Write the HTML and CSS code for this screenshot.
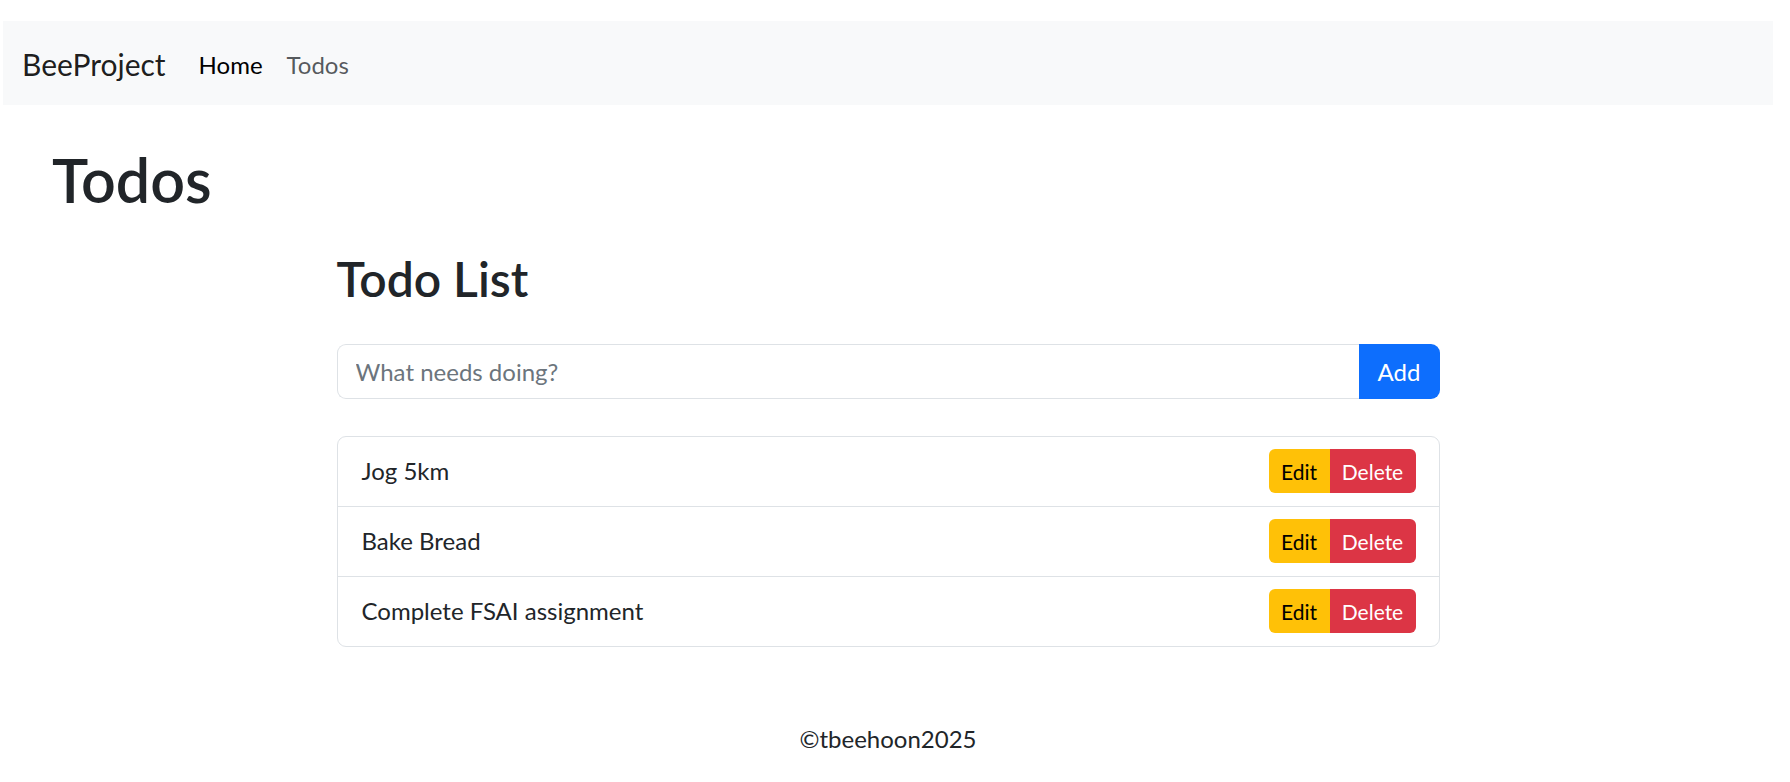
FILE: index.html
```html
<!DOCTYPE html>
<html lang="en">
<head>
<meta charset="utf-8">
<title>BeeProject - Todos</title>
<link rel="stylesheet" href="styles.css">
</head>
<body>
<div class="page">
  <nav class="navbar">
    <a class="brand" href="#">BeeProject</a>
    <div class="nav-links">
      <a class="nav-link active" href="#">Home</a>
      <a class="nav-link" href="#">Todos</a>
    </div>
  </nav>
  <main class="main">
    <h1 class="page-title">Todos</h1>
    <section class="todo">
      <h2 class="todo-title">Todo List</h2>
      <form class="input-group">
        <input class="todo-input" type="text" placeholder="What needs doing?">
        <button class="btn-add" type="button">Add</button>
      </form>
      <ul class="list">
        <li class="item"><span class="item-text">Jog 5km</span><span class="btn-group"><button class="btn btn-edit" type="button">Edit</button><button class="btn btn-delete" type="button">Delete</button></span></li>
        <li class="item"><span class="item-text">Bake Bread</span><span class="btn-group"><button class="btn btn-edit" type="button">Edit</button><button class="btn btn-delete" type="button">Delete</button></span></li>
        <li class="item"><span class="item-text">Complete FSAI assignment</span><span class="btn-group"><button class="btn btn-edit" type="button">Edit</button><button class="btn btn-delete" type="button">Delete</button></span></li>
      </ul>
    </section>
  </main>
  <footer class="footer">©tbeehoon2025</footer>
</div>
</body>
</html>
```

FILE: styles.css
```css
* { box-sizing: border-box; }
html, body { margin: 0; padding: 0; background: #fff; }
body {
  font-family: Lato, "Noto Sans", sans-serif;
  color: #212529;
  font-size: 24px;
  line-height: 1.5;
}
.page {
  margin: 0 17px 0 3px;
  padding-top: 21px;
}
.navbar {
  height: 84px;
  background: #f8f9fa;
  display: flex;
  align-items: center;
  padding: 3px 19px 0;
}
.brand {
  font-size: 30px;
  color: rgba(0,0,0,.9);
  text-decoration: none;
  margin-right: 21px;
}
.nav-links { display: flex; }
.nav-link {
  padding: 0 12px;
  text-decoration: none;
  color: rgba(33,37,41,.75);
  font-size: 24px;
}
.nav-link.active { color: #000; }
.main { padding: 0; }
.page-title {
  font-size: 61px;
  font-weight: 600;
  line-height: 1.2;
  margin: 38px 0 0 49px;
}
.todo {
  width: 1103px;
  margin: 34px auto 0;
}
.todo-title {
  font-size: 48px;
  font-weight: 600;
  line-height: 1.2;
  margin: 0;
}
.input-group {
  display: flex;
  margin: 36px 0 0;
  height: 55px;
}
.todo-input {
  flex: 1;
  min-width: 0;
  border: 1px solid #dee2e6;
  border-right: 0;
  border-radius: 9px 0 0 9px;
  padding: 0 18px;
  font-family: inherit;
  font-size: 24px;
  color: #212529;
  outline: none;
}
.todo-input::placeholder { color: #6c757d; }
.btn-add {
  width: 81px;
  border: 0;
  background: #0d6efd;
  color: #fff;
  font-family: inherit;
  font-size: 24px;
  border-radius: 0 9px 9px 0;
  padding: 0;
}
.list {
  list-style: none;
  margin: 37px 0 0;
  padding: 0;
  border: 1px solid #dee2e6;
  border-radius: 9px;
}
.item {
  display: flex;
  align-items: center;
  justify-content: space-between;
  height: 70px;
  padding: 0 23px 0 24px;
  border-top: 1px solid #dee2e6;
}
.item:first-child { border-top: 0; height: 69px; }
.btn-group { display: flex; }
.btn {
  height: 44px;
  border: 0;
  font-family: inherit;
  font-size: 21px;
  padding: 0;
}
.btn-edit {
  width: 61px;
  background: #ffc107;
  color: #000;
  border-radius: 6px 0 0 6px;
}
.btn-delete {
  width: 86px;
  background: #dc3545;
  color: #fff;
  border-radius: 0 6px 6px 0;
}
.footer {
  text-align: center;
  margin-top: 74px;
  font-size: 24px;
  line-height: 1.5;
}
```
